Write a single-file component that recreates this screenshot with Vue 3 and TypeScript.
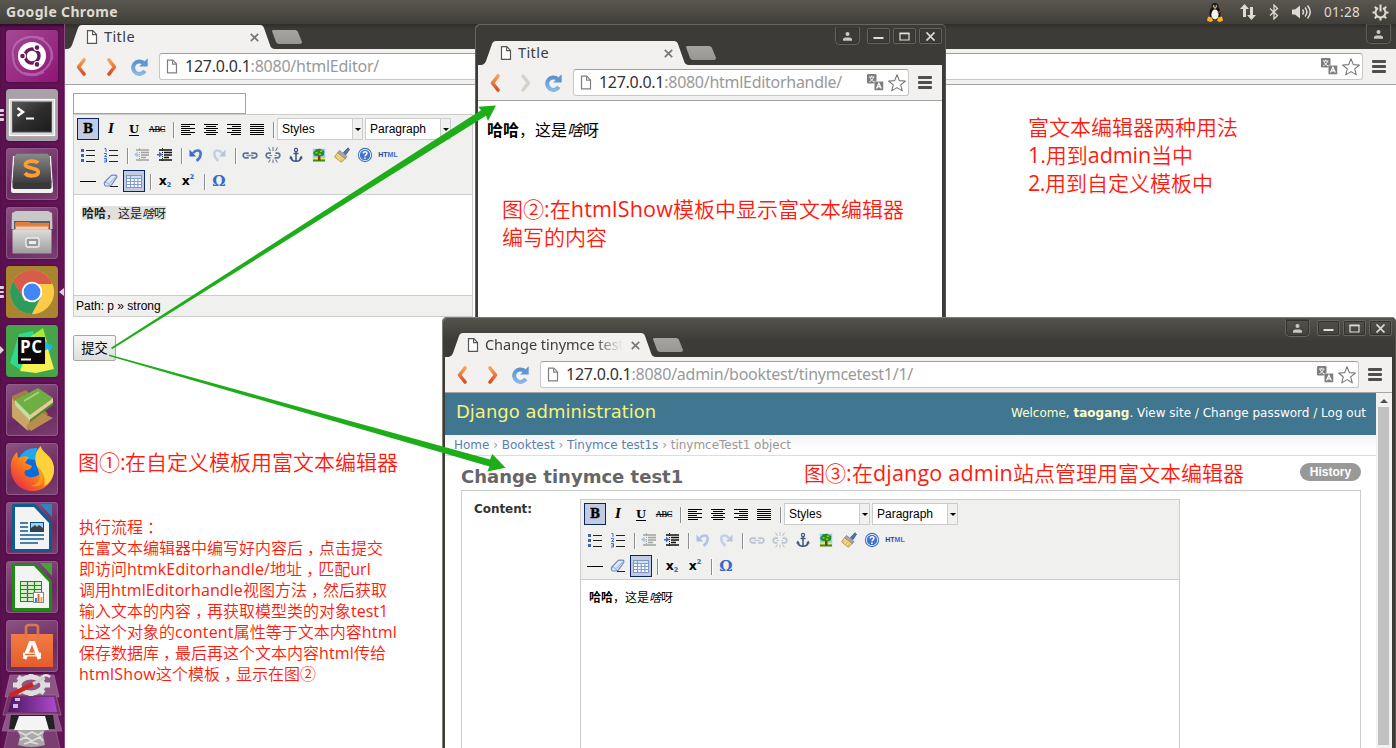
<script setup lang="ts">
import type { Directive } from 'vue'

interface Win {
  id: string
  title: string
  path: string
  kind: 'form' | 'show' | 'admin'
  forward: boolean
}
interface Note {
  id: string
  lines: { text: string; width: number }[]
}
interface Tool {
  icon: string
  on?: boolean
  off?: boolean
  offIdle?: boolean
}

const windows: Win[] = [
  { id: 'w1', title: 'Title', path: ':8080/htmlEditor/', kind: 'form', forward: true },
  { id: 'w2', title: 'Title', path: ':8080/htmlEditorhandle/', kind: 'show', forward: false },
  { id: 'w3', title: 'Change tinymce test1', path: ':8080/admin/booktest/tinymcetest1/1/', kind: 'admin', forward: true },
]
const urlWidths: Record<string, number> = { w1: 194, w2: 243, w3: 347 }

const launcher = ['ubuntu', 'terminal', 'sublime', 'files', 'chrome', 'pycharm', 'books', 'firefox', 'writer', 'calc', 'software']

const row1: Tool[] = [
  { icon: 'bold', on: true }, { icon: 'italic' }, { icon: 'underline' }, { icon: 'strike' }, { icon: '|' },
  { icon: 'left' }, { icon: 'center' }, { icon: 'right' }, { icon: 'full' }, { icon: '|' },
]
const row2: Tool[] = [
  { icon: 'bullist' }, { icon: 'numlist' }, { icon: '|' }, { icon: 'outdent', off: true }, { icon: 'indent' }, { icon: '|' },
  { icon: 'undo', offIdle: true }, { icon: 'redo', off: true }, { icon: '|' }, { icon: 'link', offIdle: true },
  { icon: 'unlink', offIdle: true }, { icon: 'anchor' }, { icon: 'image' }, { icon: 'clean' }, { icon: 'help' }, { icon: 'html' },
]
const row3: Tool[] = [
  { icon: 'hr' }, { icon: 'eraser' }, { icon: 'table', on: true }, { icon: '|' }, { icon: 'sub' }, { icon: 'sup' }, { icon: '|' }, { icon: 'omega' },
]
const rows = [row1, row2, row3]

const notes: Note[] = [
  { id: 'n1', lines: [{ text: '图①:在自定义模板用富文本编辑器', width: 320 }] },
  {
    id: 'n2',
    lines: [
      { text: '图②:在htmlShow模板中显示富文本编辑器', width: 402 },
      { text: '编写的内容', width: 105 },
    ],
  },
  { id: 'n3', lines: [{ text: '图③:在django admin站点管理用富文本编辑器', width: 440 }] },
  {
    id: 'n4',
    lines: [
      { text: '富文本编辑器两种用法', width: 210 },
      { text: '1.用到admin当中', width: 165 },
      { text: '2.用到自定义模板中', width: 185 },
    ],
  },
  {
    id: 'n5',
    lines: [
      { text: '执行流程：', width: 80 },
      { text: '在富文本编辑器中编写好内容后，点击提交', width: 304 },
      { text: '即访问htmkEditorhandle/地址，匹配url', width: 292 },
      { text: '调用htmlEditorhandle视图方法，然后获取', width: 308 },
      { text: '输入文本的内容，再获取模型类的对象test1', width: 309 },
      { text: '让这个对象的content属性等于文本内容html', width: 318 },
      { text: '保存数据库，最后再这个文本内容html传给', width: 307 },
      { text: 'htmlShow这个模板，显示在图②', width: 237 },
    ],
  },
]

const parts = (s: string) =>
  s
    .split(/([，：]|[\x20-\x7e]+)/)
    .filter(Boolean)
    .map((t) => ({ t, c: /^[，：]$/.test(t) ? 'punct' : /^[\x20-\x7e]/.test(t) ? 'lat' : 'han' }))

// Spreads the difference between natural and wanted width over the Latin runs of a line.
const vFit: Directive<HTMLElement, number> = {
  mounted(el, { value }) {
    const lat = Array.from(el.querySelectorAll<HTMLElement>('.lat'))
    const targets = lat.length ? lat : [el]
    const count = targets.reduce((n, t) => n + (t.textContent ?? '').length, 0)
    const diff = value - el.getBoundingClientRect().width
    if (count && Math.abs(diff) > 0.5) targets.forEach((t) => (t.style.letterSpacing = `${diff / count}px`))
  },
}
</script>

<template>
  <div class="desktop">
    <svg class="defs" width="0" height="0" aria-hidden="true">
      <defs>
        <linearGradient id="gOr" x1="0" y1="0" x2="0" y2="1"><stop offset="0" stop-color="#f3a45c" /><stop offset="1" stop-color="#e0491f" /></linearGradient>
        <linearGradient id="gBl" x1="0" y1="0" x2="0" y2="1"><stop offset="0" stop-color="#5b93cf" /><stop offset="1" stop-color="#86b8e8" /></linearGradient>
        <linearGradient id="gDark" x1="0" y1="0" x2="1" y2="1"><stop offset="0" stop-color="#5a5a5a" /><stop offset=".5" stop-color="#2d2d2d" /><stop offset="1" stop-color="#1c1c1c" /></linearGradient>
        <linearGradient id="gGrey" x1="0" y1="0" x2="0" y2="1"><stop offset="0" stop-color="#dcdcdc" /><stop offset="1" stop-color="#9d9d9d" /></linearGradient>
        <linearGradient id="gKey" x1="0" y1="0" x2="0" y2="1"><stop offset="0" stop-color="#8a8a8a" /><stop offset="1" stop-color="#3d3d3d" /></linearGradient>
        <linearGradient id="gFox" x1="1" y1="0" x2="0" y2="1"><stop offset="0" stop-color="#ffe14a" /><stop offset=".45" stop-color="#ff8a16" /><stop offset="1" stop-color="#e3164f" /></linearGradient>
        <linearGradient id="gVio" x1="0" y1="0" x2="1" y2="0"><stop offset="0" stop-color="#4a1760" /><stop offset="1" stop-color="#b04ad0" /></linearGradient>
        <linearGradient id="gPink" x1="0" y1="0" x2="1" y2="1"><stop offset="0" stop-color="#a34a93" /><stop offset="1" stop-color="#8f1478" /></linearGradient>
        <linearGradient id="gSoft" x1="0" y1="0" x2="0" y2="1"><stop offset="0" stop-color="#f47b45" /><stop offset="1" stop-color="#e35d2a" /></linearGradient>
        <linearGradient id="gEr" x1="0" y1="0" x2="1" y2="1"><stop offset="0" stop-color="#fff" /><stop offset="1" stop-color="#b9cdee" /></linearGradient>
      </defs>

      <!-- browser -->
      <symbol id="i-page" viewBox="0 0 12 14"><path d="M1.500 .7h5.300l3.700 3.700v8.900h-9z" fill="#fff" stroke="#555" stroke-width="1.200" /><path d="M6.600 .8v3.800h3.800" fill="none" stroke="#555" stroke-width="1.100" /></symbol>
      <symbol id="i-back" viewBox="0 0 14 20"><path d="M10 3 4.500 10l5.500 7" fill="none" stroke="url(#gOr)" stroke-width="3.600" stroke-linecap="round" stroke-linejoin="round" /></symbol>
      <symbol id="i-fwd" viewBox="0 0 14 20"><path d="M4 3 9.500 10 4 17" fill="none" stroke="url(#gOr)" stroke-width="3.600" stroke-linecap="round" stroke-linejoin="round" /></symbol>
      <symbol id="i-fwdoff" viewBox="0 0 14 20"><path d="M4 3 9.500 10 4 17" fill="none" stroke="#d5d2cc" stroke-width="3.400" stroke-linecap="round" stroke-linejoin="round" /></symbol>
      <symbol id="i-reload" viewBox="0 0 20 20"><path d="M14.200 6.200A6.600 6.600 0 1 0 15.600 14.600" fill="none" stroke="url(#gBl)" stroke-width="4.200" /><path d="M18.600 1.200v8.800H9.600z" fill="#5f97d2" /></symbol>
      <symbol id="i-trans" viewBox="0 0 17 17"><rect x="0" y="0" width="9.500" height="9.500" rx="1.200" fill="#7d7d7d" /><path d="M2 3h5.400M4.700 1.700V3M6.500 3.200C6 5.400 4.200 7 2.300 7.800M3 3.200C3.600 5.400 5.200 7 7.200 7.800" stroke="#fff" stroke-width=".9" fill="none" /><rect x="7.200" y="7.200" width="9.300" height="9.300" rx="1.200" fill="#7d7d7d" stroke="#fff" stroke-width=".5" /><path d="M9.500 14.500 11.900 9.200 14.300 14.500M10.300 12.900h3.200" stroke="#fff" stroke-width="1.200" fill="none" /></symbol>
      <symbol id="i-star" viewBox="0 0 20 20"><path d="M10 1.800 12.300 7.600 18.400 8 13.700 11.900 15.300 17.900 10 14.600 4.700 17.900 6.300 11.900 1.600 8 7.700 7.600z" fill="#fff" stroke="#777" stroke-width="1.100" stroke-linejoin="round" /></symbol>
      <symbol id="i-user" viewBox="0 0 11 11"><circle cx="5.500" cy="3" r="2" fill="#ccc8c0" /><path d="M1 9.800V7.800L3 6.500h5l2 1.300v2z" fill="#ccc8c0" /></symbol>

      <!-- editor -->
      <symbol id="i-left" viewBox="0 0 20 20"><path d="M3 5.500h14M3 7.500h9M3 9.500h14M3 11.500h9M3 13.500h14M3 15.500h10" stroke="#000" /></symbol>
      <symbol id="i-center" viewBox="0 0 20 20"><path d="M3 5.500h14M5 7.500h10M3 9.500h14M5 11.500h10M3 13.500h14M5 15.500h10" stroke="#000" /></symbol>
      <symbol id="i-right" viewBox="0 0 20 20"><path d="M3 5.500h14M8 7.500h9M3 9.500h14M8 11.500h9M3 13.500h14M7 15.500h10" stroke="#000" /></symbol>
      <symbol id="i-full" viewBox="0 0 20 20"><path d="M3 5.500h14M3 7.500h14M3 9.500h14M3 11.500h14M3 13.500h14M3 15.500h14" stroke="#000" /></symbol>
      <symbol id="i-bullist" viewBox="0 0 20 20"><path d="M3 4h3v3H3zM3 9h3v3H3zM3 14h3v3H3z" fill="#3c62b8" /><path d="M8 5.500h9M8 10.500h9M8 16.500h9" stroke="#222" /></symbol>
      <symbol id="i-numlist" viewBox="0 0 20 20"><path d="M3.500 3.500h1.500V7M3 8.500h2.500v1.200L3.500 11.500H6M3 13.500h2.500v3.500H3M3.500 15.200h2" stroke="#3c6ad0" fill="none" /><path d="M8 5.500h9M8 10.500h9M8 16.500h9" stroke="#222" /></symbol>
      <symbol id="i-indent" viewBox="0 0 20 20"><path d="M4 5h13M9 7.500h8M9 10h8M9 12.500h5M4 15h13" stroke="#111" stroke-width="1.500" /><path d="M7.500 3v14" stroke="#111" stroke-dasharray="1 1" /><path d="M2 9h2V6.500L7.500 9.500 4 12.500V10.500H2z" fill="#3c6ad0" /></symbol>
      <symbol id="i-outdent" viewBox="0 0 20 20"><path d="M4 5h13M9 7.500h8M9 10h8M9 12.500h5M4 15h13" stroke="#111" stroke-width="1.500" /><path d="M7.500 3v14" stroke="#111" stroke-dasharray="1 1" /><path d="M8 9H5.500V6.500L2 9.500 5.500 12.500V10.500H8z" fill="#3c6ad0" /></symbol>
      <symbol id="i-undo" viewBox="0 0 20 20"><path d="M7 8.200C10 4.200 15.200 4.800 14.600 9.500 14.300 12.200 13 14.200 10.500 15.800" fill="none" stroke="#4677d2" stroke-width="2.600" /><path d="M3.500 4.500v7h6.500z" fill="#3768c8" /></symbol>
      <symbol id="i-redo" viewBox="0 0 20 20"><path d="M13 8.200C10 4.200 4.800 4.800 5.400 9.500 5.700 12.200 7 14.200 9.500 15.800" fill="none" stroke="#6f97de" stroke-width="2.600" /><path d="M16.500 4.500v7h-6.500z" fill="#4b7ad0" /></symbol>
      <symbol id="i-link" viewBox="0 0 20 20"><path d="M8.700 8.200H5.500a2.300 2.300 0 0 0 0 4.600h3.200M11.300 8.200h3.200a2.300 2.300 0 0 1 0 4.600h-3.200" fill="none" stroke="#5d7295" stroke-width="1.700" /><path d="M6.500 10.500h7" stroke="#7f90ae" stroke-width="1.600" /></symbol>
      <symbol id="i-unlink" viewBox="0 0 20 20"><path d="M8 8.200H5.500a2.300 2.300 0 0 0 0 4.600h2M12.500 8.200h2a2.300 2.300 0 0 1 0 4.600h-3" fill="none" stroke="#5d7295" stroke-width="1.700" /><path d="M6.500 10.500h2.500M11.500 10.500h2M10 2v4M5.500 2.500 7.500 6M14.500 2.500l-2 3.500M10 18v-3.500M5.500 17.500l2-3M14.500 17.500l-2-3" stroke="#6d7f9c" stroke-width="1.100" /></symbol>
      <symbol id="i-anchor" viewBox="0 0 20 20"><circle cx="10" cy="5" r="1.600" fill="none" stroke="#3d5680" stroke-width="1.200" /><path d="M10 7v9M7.500 8.500h5M4.800 12.500c.5 2.600 2.600 3.700 5.200 3.700s4.700-1.100 5.200-3.700" fill="none" stroke="#3d5680" stroke-width="1.500" /><path d="M3.200 13.500 4.700 10.500l2.300 3zM16.800 13.500 15.300 10.500 13 13.500z" fill="#3d5680" /></symbol>
      <symbol id="i-image" viewBox="0 0 20 20"><rect x="3.500" y="3.500" width="13" height="13" fill="#8ccaf4" stroke="#dfe9ef" /><path d="M4 12.500h12V16H4z" fill="#e9ea55" /><path d="M4 14.500h12V16.500H4z" fill="#3a8d22" /><path d="M9 10h2.500v5.500H9z" fill="#7a3d10" /><path d="M4.500 9q-1-2.500 1.500-3 0-2.500 3-2 3-1 4 1 3 .5 2 3 .5 3-2.500 3H8q-3 .5-3.500-2z" fill="#2f8a1c" /><path d="M6.500 7h2v1.500h-2zM11 5.500h2V7h-2zM10 8.500h2V10h-2z" fill="#7fd940" /></symbol>
      <symbol id="i-clean" viewBox="0 0 20 20"><path d="M11.500 7.500 16 2.800l1.500 1.400L14 9.500z" fill="#5676b0" stroke="#334f88" stroke-width=".8" /><path d="M7.500 5.500 15 11.500 13.200 14 5.600 8z" fill="#a4aab6" stroke="#6d7380" stroke-width=".7" /><path d="M5.500 7.800 13 13.500 9.500 17.300 2.500 12z" fill="#f1d98b" stroke="#b0842a" stroke-width=".8" /><path d="M6 10.500 4.500 12.500M8.500 12 7 14.500M10.500 13.500 9 16" stroke="#d0a94e" stroke-width=".8" /></symbol>
      <symbol id="i-help" viewBox="0 0 20 20"><circle cx="10" cy="10" r="6.600" fill="#fff" stroke="#3f73cc" stroke-width="1.100" /><circle cx="10" cy="10" r="5.200" fill="#3f73cc" /><path d="M8.200 8.600c0-2.600 3.900-2.500 3.700-.2C11.800 9.700 10.200 9.800 10 11.300M9.900 12.500v1.500" stroke="#fff" stroke-width="1.500" fill="none" /></symbol>
      <symbol id="i-hr" viewBox="0 0 20 20"><path d="M2 10.500h16" stroke="#000" /></symbol>
      <symbol id="i-eraser" viewBox="0 0 20 20"><path d="M3.500 11.500 9.500 5.200q1-1 2.200-1h2.800q2 .2 1.200 2.300L10.500 14q-.8 1-2 1H5.500q-2.800-.4-2-3.500z" fill="url(#gEr)" stroke="#6d89bd" stroke-width="1.200" stroke-linejoin="round" /><path d="M3.800 11.700q4-.7 4.700 3.100M8.300 12.500 15 5.500" stroke="#8aa3cf" stroke-width=".9" fill="none" /><path d="M9 15.500h8" stroke="#222" /></symbol>
      <symbol id="i-table" viewBox="0 0 20 20"><rect x="2.500" y="4.500" width="15" height="12" fill="#fff" stroke="#7d97c8" /><path d="M3 5h14v2.500H3z" fill="#d5dff2" /><path d="M3 7.500h14M3 10.500h14M3 13.500h14M6.500 5v11.500M10.200 7v9.500M13.900 7v9.500" stroke="#7f9bd0" stroke-width="1.100" /></symbol>

      <!-- launcher -->
      <symbol id="l-ubuntu" viewBox="0 0 52 52"><rect width="52" height="52" rx="4" fill="url(#gPink)" /><path d="M8 30C2 14 18 2 38 9M44 18c6 16-8 30-26 25M14 10c16-8 34 2 32 20M38 42C22 50 6 42 7 24" fill="none" stroke="#c98abd" stroke-width="2" opacity=".55" /><circle cx="26" cy="26" r="14" fill="#fff" /><circle cx="26" cy="26" r="7" fill="none" stroke="#6b1a5c" stroke-width="3.400" /><g fill="#6b1a5c" stroke="#fff" stroke-width="1.200"><circle cx="16.500" cy="26" r="2.900" /><circle cx="31" cy="17.600" r="2.900" /><circle cx="31" cy="34.400" r="2.900" /></g></symbol>
      <symbol id="l-terminal" viewBox="0 0 52 52"><rect width="52" height="52" rx="4" fill="#a9a1a9" /><rect x="3.500" y="10.500" width="45" height="36" fill="#d9d9d9" stroke="#fff" stroke-width="1.200" /><rect x="6.500" y="13" width="39" height="30" fill="url(#gDark)" stroke="#555" /><path d="M11.500 19 17 23l-5.500 4" fill="none" stroke="#fff" stroke-width="2.400" /><path d="M20 29.500h8" stroke="#fff" stroke-width="2" /></symbol>
      <symbol id="l-sublime" viewBox="0 0 52 52"><path d="M5 40 7 8h38l2 32v3q0 2-2 2H7q-2 0-2-2z" fill="#f1f1f1" /><path d="M6.500 36 8.500 9q.5-3.500 3-3.500h29q2.500 0 3 3.500l2 27v3q0 2-2 2h-35q-2 0-2-2z" fill="#383838" /><path d="M6.500 35 8.500 9q.5-3.500 3-3.500h29q2.500 0 3 3.500l2 26z" fill="url(#gKey)" /><path d="M32 15c-2-2.500-12-3-12.500 1.500C19 20.500 32.500 19.500 32.200 24.300 31.800 28.500 22 29 19 25" fill="none" stroke="#ff9d35" stroke-width="3.800" /></symbol>
      <symbol id="l-files" viewBox="0 0 52 52"><path d="M6 6 10 4h32l4 2 .5 16h-41z" fill="#c8c8c8" /><path d="M8 14h36v10H8z" fill="#5e5e5e" /><path d="M9 17q0-2 2-2h12l2 1h18v7H9z" fill="#e07e40" /><path d="M10 19.500h32v3H10z" fill="#f1ceb0" /><path d="M6.500 22.500h39v24h-39z" fill="url(#gGrey)" /><rect x="20" y="31" width="13" height="9" rx="2" fill="#9a9a9a" stroke="#efefef" stroke-width="1.400" /><rect x="23" y="34" width="7" height="3" fill="#eee" /></symbol>
      <symbol id="l-chrome" viewBox="0 0 52 52"><rect width="52" height="52" rx="4" fill="#a8852e" /><circle cx="26" cy="26" r="22" fill="#f9c846" /><path d="M7 15A22 22 0 0 1 45 15L46.300 18H26L16 31z" fill="#d85c4a" /><path d="M7 15A22 22 0 0 0 26 48L35.500 31 26 35H19z" fill="#2c9b5c" /><path d="M26 18h20.300A22 22 0 0 1 26 48L35 31z" fill="#fbcb45" /><circle cx="26" cy="26" r="10.300" fill="#fff" /><circle cx="26" cy="26" r="8.400" fill="#4285f4" /></symbol>
      <symbol id="l-pycharm" viewBox="0 0 52 52"><rect width="52" height="52" rx="4" fill="#46a548" /><path d="M4 38 13 9 27 6l8 30-20 9z" fill="#2bdc90" /><path d="M24 12 37 3l4 14-8 18z" fill="#a8ea3c" /><path d="M37 15 47 21 41 32z" fill="#1fb6e6" /><path d="M14 46 18 36 42 24 48 44 30 48z" fill="#f4f154" /><rect x="12" y="12" width="27" height="27" fill="#090909" /><path d="M15 34.500h10" stroke="#fff" stroke-width="2" /></symbol>
      <symbol id="l-books" viewBox="0 0 52 52"><path d="M6 12 20 6l22 24-20 17L8 34z" fill="#a07f48" /><path d="M6 14 24 36l-3 10L6 33z" fill="#c9a566" /><path d="M20 42 36 29l11 5-22 13z" fill="#b88d4f" /><path d="M9 16 32 4 47 14 24 31z" fill="#6fae43" /><path d="M9 16 24 31v6L9 21z" fill="#c4dca5" /><path d="M24 31 47 14v5L24 36z" fill="#e3cc96" /><path d="M24 35.500 47 18.500V21L24 38z" fill="#4f8b2e" /><path d="M18 17 33 8" stroke="#a3d676" stroke-width="2" /></symbol>
      <symbol id="l-firefox" viewBox="0 0 52 52"><circle cx="27" cy="24" r="18" fill="#0a6bdd" /><path d="M13 15q6-11 18-10l-1 12z" fill="#1fa6ee" /><path d="M5 26C4 18 7 13 11 9l1 6q6-3 11-1l-4 6 7 3q-1 4-7 4.500-2 5 4 6.500c6 1 9-2 12-3l10-14 3 7C49 38 39 48 27 48 14 48 5 38 5 26z" fill="url(#gFox)" /><path d="M31 24C28 16 29 8 35 3c0 7 13 9 13 23 0 8-4 14-10 17 2-7 0-13-7-19z" fill="#ffd23c" /><path d="M31 23c6 5 8 11 5 17q-4 4-11 3 8-2 9-8-1-6-3-12z" fill="#ff9a1c" /></symbol>
      <symbol id="l-writer" viewBox="0 0 52 52"><path d="M6 4q0-2 2-2h21L46 20v28q0 2-2 2H8q-2 0-2-2z" fill="#0c5c92" /><path d="M9 5h19l15 16v26H9z" fill="#f3f3f3" /><path d="M34 2h12v13z" fill="#3383b9" /><path d="M14 21h8M14 25h8M14 29h8M14 33h24M14 37h24M14 41h18" stroke="#0c5c92" stroke-width="1.600" /><rect x="24.500" y="20.500" width="13" height="9" fill="#9ed1ee" stroke="#0c4d7c" /><path d="M25 29v-3l4-3 2 2 2-2 4 3v3z" fill="#34434d" /></symbol>
      <symbol id="l-calc" viewBox="0 0 52 52"><path d="M6 4q0-2 2-2h21L46 20v28q0 2-2 2H8q-2 0-2-2z" fill="#208a18" /><path d="M9 5h19l15 16v26H9z" fill="#f3f3f3" /><path d="M34 2h12v13z" fill="#42a637" /><rect x="14.500" y="20.500" width="21" height="20" fill="#d5efcc" stroke="#208a18" /><path d="M14 24.500h22M14 28.500h22M14 32.500h22M14 36.500h22M21.500 20v21M28.500 20v21" stroke="#208a18" stroke-width="1.200" /><rect x="27.500" y="31.500" width="10" height="10" fill="#fff" stroke="#888" /><path d="M30 41v-4" stroke="#3389d0" stroke-width="2" /><path d="M32.500 41v-8" stroke="#e66a20" stroke-width="2" /><path d="M35.500 41v-5" stroke="#eaa838" stroke-width="2" /></symbol>
      <symbol id="l-software" viewBox="0 0 52 52"><path d="M5 14h42v33H5z" fill="url(#gSoft)" /><path d="M20 18V8q0-3 3-3h6q3 0 3 3v10" fill="none" stroke="#d9784f" stroke-width="2.600" /><path d="M18.500 39 24.500 23h3L33.500 39" fill="none" stroke="#fff" stroke-width="3.800" /><path d="M17 34.500h18" stroke="#fff" stroke-width="3.800" /><path d="M19 34.500h10" stroke="#e5622e" stroke-width="1.300" /></symbol>
    </svg>

    <header class="topbar">
      <span v-fit="112" class="appname">Google Chrome</span>
      <div class="tray">
        <svg class="tux" width="20" height="20" viewBox="0 0 20 20"><ellipse cx="9" cy="11" rx="5.500" ry="7" fill="#111" /><circle cx="9" cy="4.500" r="3.500" fill="#1a1a1a" /><ellipse cx="9" cy="12.500" rx="3.600" ry="5" fill="#f2f2f2" /><path d="M7 5.500 9 4.800l2 .7L9 7z" fill="#f5a800" /><circle cx="7.700" cy="4" r=".8" fill="#fff" /><circle cx="10.300" cy="4" r=".8" fill="#fff" /><path d="M1 18.500 2 14.500l4 1 1 3.500-3 1zM17 18.500 16 14.500l-4 1-1 3.500 3 1z" fill="#f9b51c" /><path d="M12 11 18.500 5" stroke="#7a4a22" stroke-width="1.600" /></svg>
        <svg class="net" width="18" height="18" viewBox="0 0 18 18"><path d="M5.500 1 10 6H7v8H4V6H1z" fill="#dfdbd2" /><path d="M12.500 17 8 12h3V4h3v8h3z" fill="#dfdbd2" /></svg>
        <svg class="bt" width="10" height="16" viewBox="0 0 10 16"><path d="M1 4.500 8.500 11.500 5 15V1L8.500 4.500 1 11.500" fill="none" stroke="#dfdbd2" stroke-width="1.300" /></svg>
        <svg class="snd" width="21" height="16" viewBox="0 0 21 16"><path d="M1 5.500h3L9 1.500v13L4 10.500H1z" fill="#dfdbd2" /><path d="M11.500 5.500q2 2.500 0 5M14 3.500q3.800 4.500 0 9M16.500 1.500q5.500 6.500 0 13" fill="none" stroke="#dfdbd2" stroke-width="1.500" /></svg>
        <span v-fit="36" class="clock">01:28</span>
        <svg class="gear" width="17" height="17" viewBox="0 0 17 17"><path d="M6 4.200A5 5 0 1 0 11 4.200" fill="none" stroke="#dfdbd2" stroke-width="2" /><path d="M8.500 .5v7M8.500 13.500v3M.5 8.500H3.500M13.500 8.500h3M2.800 2.800l2 2M12.200 12.200l2 2M14.200 2.800l-2 2M4.800 12.200l-2 2" stroke="#dfdbd2" stroke-width="2" /></svg>
      </div>
    </header>

    <nav class="launcher">
      <div v-for="name in launcher" :key="name" :class="['tile', name]">
        <svg width="52" height="52"><use :href="'#l-' + name" /></svg>
        <b v-if="name === 'pycharm'" class="pc">PC</b>
        <span v-if="name === 'terminal' || name === 'chrome'" class="pips"><i /><i /><i /></span>
        <span v-if="name === 'pycharm'" class="run" />
        <span v-if="name === 'chrome'" class="focus" />
      </div>
      <svg class="stack" width="60" height="76" viewBox="0 0 60 76">
        <g fill="#8d5585" stroke="#a26f9b" stroke-width=".7"><path d="M8 2h44l5 22H3z" /><path d="M6 22h48l5 20H1z" fill="#713368" /><path d="M5 41h50l5 17H0z" /><path d="M6 58h48l4 18H2z" fill="#7b3e72" /></g>
        <ellipse cx="29" cy="12" rx="12" ry="8" fill="none" stroke="#dedede" stroke-width="5" /><path d="M29 1v4M29 19v4M11 12h4M43 12h5M16 4l4 3M42 4l-4 3M16 20l4-3M42 20l-4-3" stroke="#dedede" stroke-width="5" />
        <path d="M9 22 31 11" stroke="#c8281f" stroke-width="4.500" stroke-linecap="round" /><path d="M31 11 42 5" stroke="#cfcfcf" stroke-width="3.500" /><path d="M41 3q4-2 7 1" fill="none" stroke="#e6e6e6" stroke-width="2.500" />
        <path d="M10 24h42l3 15H6z" fill="url(#gVio)" /><path d="M13 25h5v3h-5zM11 31h5v4h-5z" fill="#d7bbe0" />
        <path d="M9 42h42l2 14H7z" fill="#222" /><path d="M17 43h26l4 14H12z" fill="#f4f4f4" />
        <path d="M15 57h28l-2 5 2 10q-14 4-27 0l2-9z" fill="#a9a9a9" /><path d="M17 59 24 62 30 59 36 62 41 59M18 67l6-3 6 4 8-4 3 4M22 71l6-2 8 2" fill="none" stroke="#dedede" stroke-width="1.800" />
      </svg>
    </nav>

    <section v-for="w in windows" :key="w.id" :class="['win', w.id]">
      <div class="titlebar">
        <div class="tab">
          <svg class="pg" width="12" height="14"><use href="#i-page" /></svg>
          <span class="tabtitle"><span v-fit="w.kind === 'admin' ? 147 : 31">{{ w.title }}</span></span>
          <svg class="tabx" width="9" height="9" viewBox="0 0 9 9"><path d="M.8 .8l7.400 7.400M8.200 .8.800 8.200" stroke="#777" stroke-width="1.700" /></svg>
        </div>
        <div class="newtab" />
        <div class="controls">
          <span class="ctl person"><svg width="11" height="11"><use href="#i-user" /></svg></span>
          <template v-if="w.kind !== 'form'">
            <span class="ctl"><svg width="11" height="9" viewBox="0 0 11 9"><path d="M.5 6h10" stroke="#e3dfd6" stroke-width="2" /></svg></span>
            <span class="ctl"><svg width="11" height="9" viewBox="0 0 11 9"><path d="M1 1.500h9v6.500H1z" fill="none" stroke="#e3dfd6" stroke-width="1.200" /><path d="M.5 1.400h10" stroke="#e3dfd6" stroke-width="1.800" /></svg></span>
            <span class="ctl"><svg width="11" height="9" viewBox="0 0 11 9"><path d="M1.500 .5l8 8M9.500 .5l-8 8" stroke="#e3dfd6" stroke-width="1.700" /></svg></span>
          </template>
        </div>
      </div>
      <div class="toolbar">
        <svg class="bk" width="14" height="20"><use href="#i-back" /></svg>
        <svg class="fw" width="14" height="20"><use :href="w.forward ? '#i-fwd' : '#i-fwdoff'" /></svg>
        <svg class="rl" width="19" height="19"><use href="#i-reload" /></svg>
        <div class="urlbox">
          <svg class="pg faint" width="12" height="15"><use href="#i-page" /></svg>
          <span v-fit="urlWidths[w.id]" class="url"><b>127.0.0.1</b>{{ w.path }}</span>
          <svg class="tr" width="17" height="17"><use href="#i-trans" /></svg>
          <svg class="st" width="20" height="20"><use href="#i-star" /></svg>
        </div>
        <div class="menu"><i /><i /><i /></div>
      </div>

      <div :class="['view', w.kind]">
        <p v-if="w.kind === 'show'" class="shown"><b>哈哈</b>，这是<em>啥</em>呀</p>
        <template v-else>
          <div v-if="w.kind === 'form'" class="field" />
          <div v-else class="adminhead">
            <span v-fit="200" class="brand">Django administration</span>
            <span v-fit="355" class="who">Welcome, <b>taogang</b>. <a>View site</a> / <a>Change password</a> / <a>Log out</a></span>
          </div>
          <div v-if="w.kind === 'admin'" class="crumbs"><span v-fit="337"><a>Home</a> › <a>Booktest</a> › <a>Tinymce test1s</a> › tinymceTest1 object</span></div>
          <div v-if="w.kind === 'admin'" class="headrow">
            <h1 v-fit="222">Change tinymce test1</h1>
            <span class="history">History</span>
          </div>
          <div class="formrow">
            <label v-if="w.kind === 'admin'"><span v-fit="58">Content:</span></label>
            <div class="editor">
              <div class="tools">
                <div v-for="(row, r) in rows" :key="r" class="trow">
                  <template v-for="(t, i) in row" :key="i">
                    <span v-if="t.icon === '|'" class="sep" />
                    <span v-else :class="['btn', t.icon, { on: t.on, off: t.off || (t.offIdle && w.kind === 'admin') }]">
                      <template v-if="t.icon === 'bold'">B</template>
                      <template v-else-if="t.icon === 'italic'">I</template>
                      <template v-else-if="t.icon === 'underline'">U</template>
                      <template v-else-if="t.icon === 'strike'">ABC</template>
                      <template v-else-if="t.icon === 'html'"><span class="ht">HT</span><span>ML</span></template>
                      <template v-else-if="t.icon === 'sub'">x<sub>2</sub></template>
                      <template v-else-if="t.icon === 'sup'">x<sup>2</sup></template>
                      <template v-else-if="t.icon === 'omega'">Ω</template>
                      <svg v-else width="20" height="20"><use :href="'#i-' + t.icon" /></svg>
                    </span>
                  </template>
                  <template v-if="r === 0">
                    <span class="select"><span class="val">Styles</span><span class="arr" /></span>
                    <span class="select"><span class="val">Paragraph</span><span class="arr" /></span>
                  </template>
                </div>
              </div>
              <div class="doc"><span><b>哈哈</b>，这是<em>啥</em>呀</span></div>
              <div v-if="w.kind === 'form'" class="status">Path: p » strong</div>
            </div>
          </div>
          <button v-if="w.kind === 'form'" class="submit">提交</button>
          <div v-if="w.kind === 'admin'" class="scroll"><span class="up" /><span class="thumb" /></div>
        </template>
      </div>
    </section>

    <svg class="arrows" width="1396" height="748" viewBox="0 0 1396 748">
      <path d="M111 347.700 481 110.300 478.300 106.700 496 105.500 488 121 486 115.800 112 349.300z" fill="#1dad19" />
      <path d="M109 354.600 490 459.500 492.300 454 505.500 467.700 487.300 471.500 489.500 466.500 109 356z" fill="#1dad19" />
    </svg>

    <div v-for="n in notes" :key="n.id" :class="['note', n.id]">
      <div v-for="(l, i) in n.lines" :key="i" class="line">
        <span v-fit="l.width" class="fit"><span v-for="(p, k) in parts(l.text)" :key="k" :class="p.c">{{ p.t }}</span></span>
      </div>
    </div>
  </div>
</template>

<style>
html, body { margin: 0; background: #fff; overflow: hidden; }
</style>

<style scoped>
.desktop { position: relative; width: 1396px; height: 748px; overflow: hidden; background: #fff; font-family: "Noto Sans", "Open Sans", "Noto Sans CJK SC", sans-serif; }
.desktop * { box-sizing: border-box; }
.defs { position: absolute; }
svg { display: block; flex: none; }
i { display: block; }

.topbar { height: 24px; background: linear-gradient(#59574f, #3f3e39); color: #dfdbd2; display: flex; justify-content: space-between; align-items: center; padding: 0 7px 0 6px; }
.appname { font-size: 14px; font-weight: 700; line-height: 24px; white-space: pre; }
.tray { display: flex; align-items: center; }
.tux { margin-right: 13px; }
.net { margin-right: 12px; }
.bt { margin-right: 12px; }
.snd { margin-right: 12px; }
.clock { font-size: 13.500px; margin-right: 12px; white-space: pre; }

.launcher { position: absolute; left: 0; top: 24px; width: 65px; height: 724px; z-index: 5; background: linear-gradient(90deg, #5c1150, #651457); border-right: 1px solid #8a4c80; padding: 6px 0 0 6px; display: flex; flex-direction: column; gap: 7px; box-shadow: inset 0 3px 3px -1px #2f0a29; }
.tile { position: relative; width: 52px; height: 52px; flex: none; border-radius: 4px; background: linear-gradient(160deg, #8c5484, #6c2a62 60%, #79406f); box-shadow: inset 0 0 0 1px #8f5b88, 0 0 3px #3d0a35; }
.tile.ubuntu, .tile.terminal, .tile.chrome, .tile.pycharm { box-shadow: 0 0 3px #3d0a35; }
.pc { position: absolute; left: 14px; top: 13px; font: 700 17px/17px "Open Sans", sans-serif; letter-spacing: .5px; color: #fff; }
.pips { position: absolute; left: -6px; top: 20px; display: grid; gap: 2px; }
.pips i { width: 4px; height: 2.500px; background: #dcd2da; border-radius: 0 1px 1px 0; }
.run { position: absolute; left: -6px; top: 21px; border: 4.500px solid transparent; border-left-color: #dcd2da; border-right: 0; }
.focus { position: absolute; right: -6px; top: 22px; border: 4px solid transparent; border-right: 5px solid #dcd2da; border-left: 0; }
.stack { margin: -6px 0 0 -4px; }

.win { position: absolute; display: flex; flex-direction: column; background: #3c3b37; }
.w1 { left: 64px; top: 24px; width: 1332px; height: 724px; }
.w2 { left: 475px; top: 24px; width: 471px; height: 296px; padding: 0 4px 0 3px; border-radius: 5px 5px 0 0; box-shadow: inset 1px 1px 0 #66655e, inset -1px 0 0 #55544e; }
.w3 { left: 442px; top: 317px; width: 954px; height: 440px; padding: 0 4px 0 3px; border-radius: 5px 5px 0 0; background: linear-gradient(#55554d, #3c3b37 24px); box-shadow: inset 1px 1px 0 #7d7e74, inset -1px 0 0 #55544e; }
.titlebar { height: 41px; flex: none; display: flex; align-items: flex-end; }
.w1 .titlebar { height: 25px; background: linear-gradient(#2f2e2a, #3c3b37 5px); }
.w3 .titlebar { height: 40px; }
.tab { width: 211px; height: 24px; padding-left: 22px; display: flex; align-items: center; background: #f2f1f0; clip-path: path("M2 24C6 24 7 22 8 20L14 3Q15 0 18 0H196Q199 0 200 3L206 20Q207 24 211 24z"); }
.pg { margin-right: 6px; }
.tabtitle { width: 138px; overflow: hidden; white-space: nowrap; font-size: 14.500px; line-height: 22px; height: 24px; color: #3c3c3c; flex: none; }
.tabtitle span { display: inline-block; }
.w3 .tabtitle { mask-image: linear-gradient(90deg, #000 108px, transparent 138px); -webkit-mask-image: linear-gradient(90deg, #000 108px, transparent 138px); }
.tabx { margin-left: 8px; }
.newtab { width: 31px; height: 14px; margin: 0 0 5px -4px; background: linear-gradient(#a5a4a1, #989794); clip-path: path("M1 1Q1 0 3 0H24Q26 0 27 2L31 12Q31 14 29 14H8Q6 14 5 12z"); }
.controls { margin-left: auto; align-self: flex-start; display: flex; gap: 3px; padding-top: 4px; }
.w3 .controls { padding-top: 3px; }
.ctl { width: 23px; height: 16px; border: 1px solid #65645d; border-radius: 2px; display: flex; align-items: center; justify-content: center; box-shadow: inset 0 0 0 1px #34332f; }
.ctl.person { width: 25px; height: 18px; margin: -1px 4px 0 0; border-radius: 0 0 5px 5px; border-top-color: #45443f; }
.w1 .controls { padding: 0 1px 0 0; }
.w1 .ctl.person { height: 20px; margin-top: 0; }

.toolbar { height: 36px; flex: none; display: flex; align-items: center; background: #f2f1f0; border-bottom: 1px solid #a5a4a2; padding-left: 10px; }
.bk { margin-right: 17px; }
.fw { margin-right: 11px; }
.rl { margin-right: 10px; }
.urlbox { flex: 1; height: 27px; display: flex; align-items: center; background: #fff; border: 1px solid #c9c7c4; border-top-color: #a19f9c; border-radius: 3px; padding: 0 1px 0 6px; }
.faint { opacity: .75; margin-right: 7px; }
.url { font-size: 16px; line-height: 22px; height: 24px; color: #999; white-space: pre; }
.url b { font-weight: 400; color: #333; }
.tr { margin-left: auto; margin-right: 3px; }
.menu { width: 33px; padding-left: 9px; display: grid; gap: 2px; }
.menu i { width: 14px; height: 3px; border-radius: 1px; background: #4f4f4f; }

.view { flex: 1; background: #fff; min-height: 0; overflow: hidden; position: relative; }
.view.form { padding: 8px 0 0 9px; }
.shown { margin: 16px 0 0 9px; font: 16px/24px "Noto Sans CJK SC", sans-serif; color: #000; }
em { font-style: italic; }
.field { width: 173px; height: 21px; border: 1px solid #a3a3a3; }

.editor { background: #f0f0ee; border: 1px solid #ccc; font-family: "Liberation Sans", "Noto Sans CJK SC", sans-serif; }
.form .editor { width: 400px; height: 203px; }
.admin .editor { width: 600px; height: 300px; }
.tools { height: 80px; padding: 3px 0 0 3px; display: flex; flex-direction: column; gap: 4px; border-bottom: 1px solid #ccc; }
.trow { display: flex; height: 22px; }
.btn { width: 22px; height: 22px; margin-right: 1px; border: 1px solid transparent; display: flex; align-items: center; justify-content: center; color: #000; line-height: 20px; flex: none; }
.btn.on { border-color: #0a246a; background: #c2cbe0; }
.btn.off svg { opacity: .35; }
.bold { font: 900 12px/22px "DejaVu Serif", serif; -webkit-text-stroke: .4px #000; }
.italic { font: italic 700 12px/22px "DejaVu Serif", serif; }
.underline { font: 700 11.500px/20px "DejaVu Serif", serif; text-decoration: underline; text-underline-offset: 2px; }
.strike { font: 8.500px/20px "Liberation Serif", serif; letter-spacing: -.4px; text-decoration: line-through; -webkit-text-stroke: .2px #000; }
.html { font: 700 7px/20px "Liberation Sans", sans-serif; color: #3a6bd0; }
.ht { color: #24468e; }
.sub, .sup { font: 700 12.500px/22px "DejaVu Sans", sans-serif; }
.sub sub, .sup sup { font-size: 6.500px; line-height: 7px; color: #3262c0; }
.sub sub { align-self: flex-end; padding-bottom: 2px; }
.sup sup { align-self: flex-start; padding-top: 3px; }
.omega { font: 700 15px/22px "DejaVu Serif", serif; color: #3a68c6; }
.sep { width: 8px; height: 16px; margin-top: 4px; flex: none; background: linear-gradient(90deg, transparent 4px, #8b8d94 4px, #8b8d94 5px, #fff 5px, #fff 6px, transparent 6px); }
.select { width: 86px; height: 22px; margin-right: 2px; border: 1px solid #ccc; background: #fff; display: flex; font-size: 12px; line-height: 20px; }
.val { flex: 1; padding-left: 4px; }
.arr { width: 10px; border-left: 1px solid #ccc; background: #f0f0ee; display: flex; align-items: center; justify-content: center; }
.arr::after { content: ""; border: 3px solid transparent; border-top-color: #000; border-bottom: 0; }
.doc { height: 100px; background: #fff; padding: 8px 8px; font: 12px/18px "Noto Sans CJK SC", sans-serif; color: #000; }
.form .doc span { display: inline-block; line-height: 14px; background: #e1e0dc; color: #222; }
.form .doc { padding-top: 11px; line-height: 14px; }
.admin .doc { height: 218px; }
.status { border-top: 1px solid #ccc; height: 21px; line-height: 20px; padding-left: 2px; font-size: 12px; color: #000; }
.submit { display: block; margin: 18px 0 0; width: 43px; height: 26px; padding: 0; border: 1px solid #a6a6a6; border-radius: 2px; background: linear-gradient(#f6f6f6, #dedede); font: 13.330px/22px "Noto Sans CJK SC", sans-serif; color: #000; }

.view.admin { font-family: "DejaVu Sans", sans-serif; padding-right: 16px; }
.adminhead { height: 42px; background: #417690; display: flex; justify-content: space-between; align-items: center; padding: 0 10px 6px 11px; }
.brand { font-size: 18px; color: #f4f379; white-space: pre; }
.who { font-size: 12px; color: #ffc; white-space: pre; padding-top: 4px; }
.who a { color: #fff; }
.crumbs { height: 21px; border-bottom: 1px solid #ddd; background: linear-gradient(#f3f3f3, #fff 14px); font-size: 12px; line-height: 20px; color: #999; padding-left: 9px; white-space: pre; }
.crumbs span { display: inline-block; }
.crumbs a { color: #5b80b2; }
.headrow { display: flex; justify-content: space-between; padding: 7px 15px 0 16px; height: 34px; }
h1 { margin: 0; padding-top: 2px; font-size: 18px; line-height: 24px; color: #666; white-space: pre; }
.history { height: 18px; width: 61px; border-radius: 9px; background: #999; color: #fff; text-align: center; font: 700 12px/18px "Liberation Sans", sans-serif; }
.admin .formrow { margin: 0 15px 0 16px; height: 320px; border: 1px solid #ccc; display: flex; padding: 8px 0 0 12px; }
label { width: 106px; font-size: 12px; font-weight: 700; line-height: 20px; color: #333; }
label span { display: inline-block; }
.scroll { position: absolute; right: 0; top: 0; bottom: 0; width: 16px; background: #f1f1f1; }
.up { display: block; width: 0; margin: 6px 0 0 4px; border: 4px solid transparent; border-top: 0; border-bottom: 4px solid #505050; }
.thumb { display: block; margin: 4px 0 0 2px; width: 11px; height: 338px; background: #c1c1c1; }

.arrows { position: absolute; left: 0; top: 0; z-index: 6; pointer-events: none; }
.note { position: absolute; z-index: 7; color: #ff1a0d; font: 350 21px/28px "Noto Sans CJK SC", sans-serif; white-space: pre; }
.fit { display: inline-block; }
.line { height: 28px; }
.lat { font-family: "Open Sans", "Noto Sans", sans-serif; font-weight: 400; line-height: 1; }
.punct { display: inline-block; padding-left: .25em; letter-spacing: -.25em; }
.n1 { left: 78px; top: 447px; }
.n2 { left: 502px; top: 194px; }
.n3 { left: 804px; top: 458px; }
.n4 { left: 1028px; top: 112px; }
.n1 .lat, .n2 .lat, .n3 .lat, .n4 .lat { font-size: 21.500px; }
.n5 { left: 79px; top: 516px; font-size: 16px; line-height: 21px; }
.n5 .line { height: 21px; }
</style>
